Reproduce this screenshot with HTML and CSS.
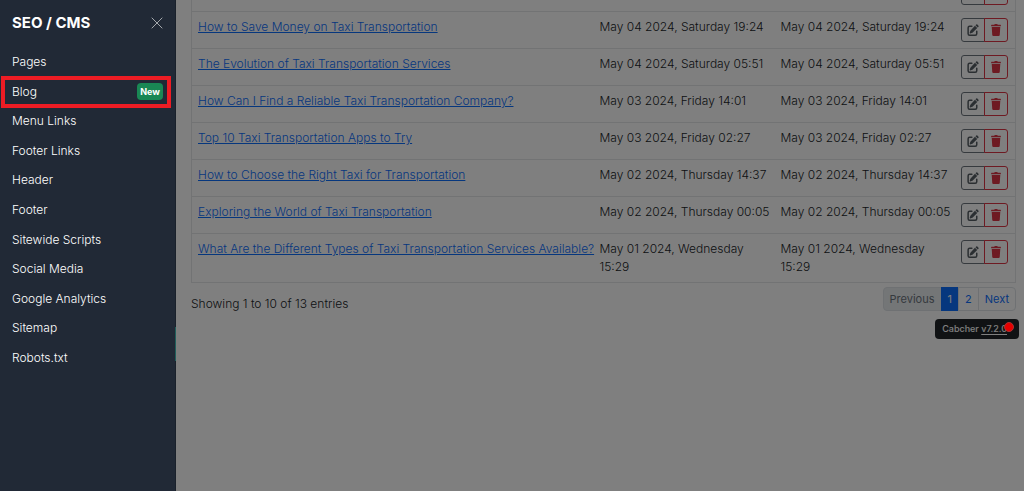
FILE: index.html
```
<!DOCTYPE html>
<html lang="en">
<head>
<meta charset="UTF-8">
<meta name="viewport" content="width=device-width, initial-scale=1">
<title>SEO / CMS - Blog</title>
<link rel="stylesheet" href="styles.css">
</head>
<body>
<svg class="sprite" aria-hidden="true">
  <symbol id="icon-edit" viewBox="0 0 16 16">
    <path d="M15.3 2.200a1.100 1.100 0 0 1 0 1.500L14.300 4.700l-3-3L12.300.7a1.100 1.100 0 0 1 1.500 0zM10.600 2.400l3 3-6 6a1.500 1.500 0 0 1-.6.4l-2.600.8a.6.6 0 0 1-.8-.8l.8-2.600a1.500 1.500 0 0 1 .4-.6z"/>
    <path d="M6.500 3H3.500Q1.500 3 1.500 5V13Q1.500 15 3.500 15H11Q13 15 13 13V9.500" fill="none" stroke="currentColor" stroke-width="2" stroke-linecap="round"/>
  </symbol>
  <symbol id="icon-trash" viewBox="0 0 14 16">
    <path d="M1 1h3.500l.6-.7Q5.400 0 5.800 0h2.400q.4 0 .7.300l.6.700H13q.5 0 .5.500V3H.5V1.500Q.5 1 1 1zM1.300 4h11.400l-.7 10.600Q11.900 16 10.500 16h-7Q2.100 16 2 14.600z"/>
  </symbol>
</svg>

<main class="page">
  <table class="posts">
    <colgroup>
      <col>
      <col class="col-date">
      <col class="col-date">
      <col class="col-actions">
    </colgroup>
    <tbody id="postRows"></tbody>
  </table>

  <div class="table-footer">
    <div class="info">Showing 1 to 10 of 13 entries</div>
    <nav class="pagination" aria-label="Posts pages">
      <button type="button" class="page-link" disabled>Previous</button>
      <a href="#" class="page-link active" aria-current="page">1</a>
      <a href="#" class="page-link">2</a>
      <a href="#" class="page-link">Next</a>
    </nav>
  </div>

  <div class="version-row">
    <div class="version">Cabcher <a href="#">v7.2.0</a><span class="update-dot"></span></div>
  </div>
</main>

<div class="backdrop"></div>

<aside class="sidebar" aria-label="SEO / CMS">
  <div class="sidebar-header">
    <h1>SEO / CMS</h1>
    <button type="button" class="close" aria-label="Close">
      <svg viewBox="0 0 12 12"><path d="M.7.7l10.600 10.600M11.300.7L.7 11.300"/></svg>
    </button>
  </div>
  <nav class="menu">
    <a href="#">Pages</a>
    <a href="#" class="current">Blog <span class="badge">New</span></a>
    <a href="#">Menu Links</a>
    <a href="#">Footer Links</a>
    <a href="#">Header</a>
    <a href="#">Footer</a>
    <a href="#">Sitewide Scripts</a>
    <a href="#">Social Media</a>
    <a href="#">Google Analytics</a>
    <a href="#">Sitemap</a>
    <a href="#">Robots.txt</a>
  </nav>
  <span class="sidebar-handle"></span>
</aside>

<script>
const posts = [
  ['', ''],
  ['How to Save Money on Taxi Transportation', 'May 04 2024, Saturday 19:24'],
  ['The Evolution of Taxi Transportation Services', 'May 04 2024, Saturday 05:51'],
  ['How Can I Find a Reliable Taxi Transportation Company?', 'May 03 2024, Friday 14:01'],
  ['Top 10 Taxi Transportation Apps to Try', 'May 03 2024, Friday 02:27'],
  ['How to Choose the Right Taxi for Transportation', 'May 02 2024, Thursday 14:37'],
  ['Exploring the World of Taxi Transportation', 'May 02 2024, Thursday 00:05'],
  ['What Are the Different Types of Taxi Transportation Services Available?', 'May 01 2024, Wednesday 15:29']
];

document.getElementById('postRows').innerHTML = posts.map(([title, date]) => `
  <tr>
    <td class="title"><a href="#">${title}</a></td>
    <td class="date">${date}</td>
    <td class="date">${date}</td>
    <td class="actions">
      <div class="btn-group">
        <button type="button" class="btn-edit" aria-label="Edit"><svg><use href="#icon-edit"/></svg></button>
        <button type="button" class="btn-delete" aria-label="Delete"><svg><use href="#icon-trash"/></svg></button>
      </div>
    </td>
  </tr>`).join('');
</script>
</body>
</html>
```
FILE: styles.css
```
* {
  box-sizing: border-box;
}

body {
  margin: 0;
  min-height: 100vh;
  background: #fff;
  color: #212529;
  font-family: Inter, "Liberation Sans", sans-serif;
  font-size: 12px;
  line-height: 18px;
  overflow: hidden;
}

button {
  font: inherit;
  cursor: pointer;
}

.sprite {
  display: none;
}

.page {
  padding: 0 8px 0 191px;
  font-weight: 300;
}

/* table, scrolled so the first row is cut by the top edge */
.posts {
  width: 100%;
  margin-top: -26px;
  table-layout: fixed;
  border-collapse: collapse;
  border: 1px solid #e4e6e9;
}
.posts td {
  padding: 6px;
  border-bottom: 1px solid #e4e6e9;
  vertical-align: top;
}
.posts .title {
  white-space: nowrap;
}
.posts .date {
  padding-right: 2px;
}
.posts .actions {
  padding-left: 5px;
  padding-right: 7px;
}
.posts a {
  color: #0d6efd;
}
.col-date {
  width: 181px;
}
.col-actions {
  width: 60px;
}

.btn-group {
  display: flex;
  justify-content: flex-end;
}
.btn-group button {
  display: flex;
  align-items: center;
  justify-content: center;
  width: 24px;
  height: 24px;
  padding: 0;
  background: none;
  border: 1px solid;
}
.btn-group svg {
  width: 12px;
  height: 12px;
  fill: currentColor;
}
.btn-group .btn-edit {
  width: 25px;
  color: #6c757d;
  border-radius: 3px 0 0 3px;
}
.btn-group .btn-edit svg {
  color: #565e64;
}
.btn-group .btn-delete {
  margin-left: -1px;
  color: #dc3545;
  border-radius: 0 3px 3px 0;
}

.table-footer {
  display: flex;
  justify-content: space-between;
  margin-top: 4px;
}
.info {
  padding-top: 8px;
}

.pagination {
  display: flex;
  font-size: 11px;
  font-weight: 400;
}
.page-link {
  height: 24px;
  padding: 2px 6px;
  border: 1px solid #dee2e6;
  margin-left: -1px;
  background: #fff;
  color: #0d6efd;
  text-decoration: none;
}
.page-link:first-child {
  border-radius: 4px 0 0 4px;
}
.page-link:last-child {
  border-radius: 0 4px 4px 0;
}
.page-link:disabled {
  background: #e9ecef;
  color: #6c757d;
}
.page-link.active {
  background: #0d6efd;
  border-color: #0d6efd;
  color: #fff;
}

.version-row {
  display: flex;
  justify-content: flex-end;
  margin: 6px -3px 0 0;
}
.version {
  position: relative;
  padding: 1px 12px 1px 7px;
  background: #212529;
  border-radius: 4px;
  color: #fff;
  font-size: 9px;
  font-weight: 500;
}
.version a {
  color: inherit;
  text-underline-offset: 2px;
}
/* stays bright above the backdrop */
.update-dot {
  position: absolute;
  top: 3px;
  right: 5px;
  z-index: 20;
  width: 10px;
  height: 10px;
  background: #e60000;
  border: 1px solid #a33;
  border-radius: 50%;
}

.backdrop {
  position: fixed;
  inset: 0;
  z-index: 10;
  background: rgba(0, 0, 0, 0.5);
}

.sidebar {
  position: fixed;
  top: 0;
  bottom: 0;
  left: 0;
  z-index: 30;
  width: 176px;
  padding: 12px;
  background: #212936;
  border-right: 1px solid #1a212b;
  color: #fff;
}
.sidebar-header {
  display: flex;
  align-items: center;
  justify-content: space-between;
  height: 22px;
}
.sidebar-header h1 {
  margin: 0;
  font-size: 15px;
  font-weight: 700;
}
.close {
  display: flex;
  padding: 0;
  background: none;
  border: 0;
}
.close svg {
  width: 12px;
  height: 12px;
  fill: none;
  stroke: #a4a8ad;
}

.menu {
  display: flex;
  flex-direction: column;
  justify-content: space-between;
  height: 314px;
  margin-top: 19px;
  font-weight: 300;
}
.menu a {
  position: relative;
  display: flex;
  align-items: center;
  justify-content: space-between;
  height: 18px;
  color: #fff;
  text-decoration: none;
}
.menu .current::before {
  content: "";
  position: absolute;
  inset: -7px -8px -7px -11px;
  border: 4px solid #ed1c24;
}
.badge {
  padding: 0 3px;
  background: #198754;
  border-radius: 4px;
  font-size: 9px;
  font-weight: 700;
  line-height: 17px;
}

.sidebar-handle {
  position: absolute;
  top: 327px;
  right: -1px;
  width: 1px;
  height: 34px;
  background: #1f5f5b;
}
```
